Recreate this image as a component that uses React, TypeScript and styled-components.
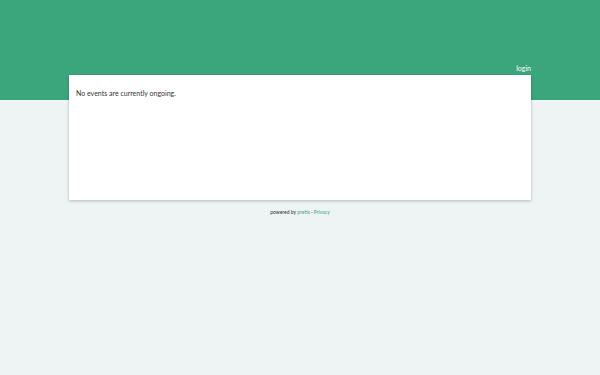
import React from "react";
import styled, { createGlobalStyle } from "styled-components";

const Global = createGlobalStyle`
  html, body { margin: 0; padding: 0; }
  body {
    background: #eef4f3;
    font-family: Lato, "Open Sans", sans-serif;
    color: #333;
    -webkit-font-smoothing: antialiased;
  }
`;

const Header = styled.header`
  background: #3ba57b;
  height: 100px;
  box-sizing: border-box;
`;

const Container = styled.div`
  width: 462px;
  margin: 0 auto;
`;

const HeaderInner = styled(Container)`
  display: flex;
  justify-content: flex-end;
  padding-top: 64px;
`;

const Login = styled.a`
  color: #fff;
  font-size: 7px;
  line-height: 9px;
  text-decoration: none;
`;

const Card = styled(Container)`
  background: #fff;
  margin-top: -25px;
  height: 125px;
  box-sizing: border-box;
  padding: 14px 7px;
  box-shadow: 0 1px 3px rgba(0, 0, 0, 0.25);
  position: relative;
`;

const Message = styled.p`
  margin: 0;
  font-size: 7px;
  line-height: 9px;
  color: #333;
`;

const Footer = styled.footer`
  text-align: center;
  font-size: 5px;
  color: #333;
  margin-top: 9px;
`;

const FooterLink = styled.a`
  color: #3ba57b;
  text-decoration: none;
`;

export default function App() {
  return (
    <>
      <Global />
      <Header>
        <HeaderInner>
          <Login href="#">login</Login>
        </HeaderInner>
      </Header>
      <Card>
        <Message>No events are currently ongoing.</Message>
      </Card>
      <Footer>
        powered by <FooterLink href="#">pretix</FooterLink> · <FooterLink href="#">Privacy</FooterLink>
      </Footer>
    </>
  );
}
